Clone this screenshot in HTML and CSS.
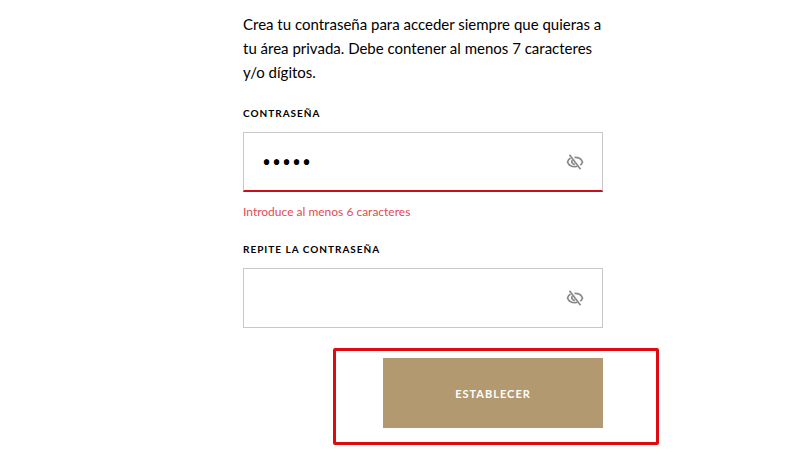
FILE: index.html
```html
<!DOCTYPE html>
<html lang="es">
<head>
<meta charset="utf-8">
<meta name="viewport" content="width=device-width, initial-scale=1">
<title>Crea tu contraseña</title>
<link rel="stylesheet" href="styles.css">
</head>
<body>
<main class="page">
  <form class="form">
    <p class="intro">Crea tu contraseña para acceder siempre que quieras a tu área privada. Debe contener al menos 7 caracteres y/o dígitos.</p>
    <div class="field">
      <label class="label" for="password">CONTRASEÑA</label>
      <div class="control control-error">
        <input class="input" id="password" type="password" value="12345" aria-describedby="password-error" aria-invalid="true">
        <button class="toggle" type="button" aria-label="Mostrar contraseña">
          <svg class="icon" viewBox="0 0 18 18" aria-hidden="true">
            <path d="M4.500 5C3 6 2 7.300 1.500 9c1 2.800 3.800 4.700 7.500 4.700 1 0 1.800-.1 2.600-.4M8.500 4.300c3.800-.1 7 1.700 8 4.700-.4 1.300-1.200 2.300-2.300 3.100"/>
            <path d="M6.200 7c-1.200 2.200.3 4.500 2.800 4.500"/>
            <path d="M3.500 1.800 14.500 16.200"/>
          </svg>
        </button>
      </div>
      <p class="error" id="password-error">Introduce al menos 6 caracteres</p>
    </div>
    <div class="field">
      <label class="label" for="repeat">REPITE LA CONTRASEÑA</label>
      <div class="control">
        <input class="input" id="repeat" type="password">
        <button class="toggle" type="button" aria-label="Mostrar contraseña">
          <svg class="icon" viewBox="0 0 18 18" aria-hidden="true">
            <path d="M4.500 5C3 6 2 7.300 1.500 9c1 2.800 3.800 4.700 7.500 4.700 1 0 1.800-.1 2.600-.4M8.500 4.300c3.800-.1 7 1.700 8 4.700-.4 1.300-1.200 2.300-2.300 3.100"/>
            <path d="M6.200 7c-1.200 2.200.3 4.500 2.800 4.500"/>
            <path d="M3.500 1.800 14.500 16.200"/>
          </svg>
        </button>
      </div>
    </div>
    <div class="actions">
      <button class="submit" type="submit">ESTABLECER</button>
    </div>
  </form>
</main>
</body>
</html>
```
FILE: styles.css
```css
* {
  box-sizing: border-box;
}

body {
  margin: 0;
  background: #fff;
  color: #000;
  font-family: Lato, "Noto Sans", sans-serif;
}

.page {
  display: grid;
  grid-template-columns: minmax(0, 360px);
  justify-content: center;
  padding: 12px 0 27px 45px;
}

.intro {
  margin: 0 0 23px;
  font-size: 15px;
  line-height: 24px;
}

.field {
  margin-bottom: 30px;
}

.field:has(.error) {
  margin-bottom: 22px;
}

.label {
  display: block;
  margin-bottom: 13px;
  font-size: 10px;
  font-weight: 700;
  line-height: 12px;
  letter-spacing: 1px;
}

.control {
  display: flex;
  align-items: center;
  height: 60px;
  padding: 0 18px;
  border: 1px solid #c8c8c8;
}

.control-error {
  border-bottom: 2px solid #c8101a;
}

.input {
  flex: 1;
  min-width: 0;
  height: 100%;
  padding: 0;
  border: 0;
  outline: 0;
  background: none;
  color: #000;
  font-family: "Noto Sans", sans-serif;
  font-size: 24px;
  letter-spacing: 1px;
}

.toggle {
  display: flex;
  padding: 0;
  border: 0;
  background: none;
}

.icon {
  width: 18px;
  height: 18px;
  fill: none;
  stroke: #8a8a8a;
  stroke-width: 1.7;
}

.error {
  margin: 11px 0 0;
  color: #e14b55;
  font-size: 12px;
  line-height: 18px;
}

.actions {
  position: relative;
  display: flex;
  justify-content: flex-end;
}

.actions::after {
  content: "";
  position: absolute;
  inset: -10px -56px -17px 90px;
  border: 3px solid #e00b11;
  border-radius: 2px;
  pointer-events: none;
}

.submit {
  width: 220px;
  height: 70px;
  padding: 0;
  border: 0;
  background: #b39970;
  color: #fff;
  font-family: Lato, "Noto Sans", sans-serif;
  font-size: 11px;
  font-weight: 700;
  letter-spacing: 1px;
}
```
